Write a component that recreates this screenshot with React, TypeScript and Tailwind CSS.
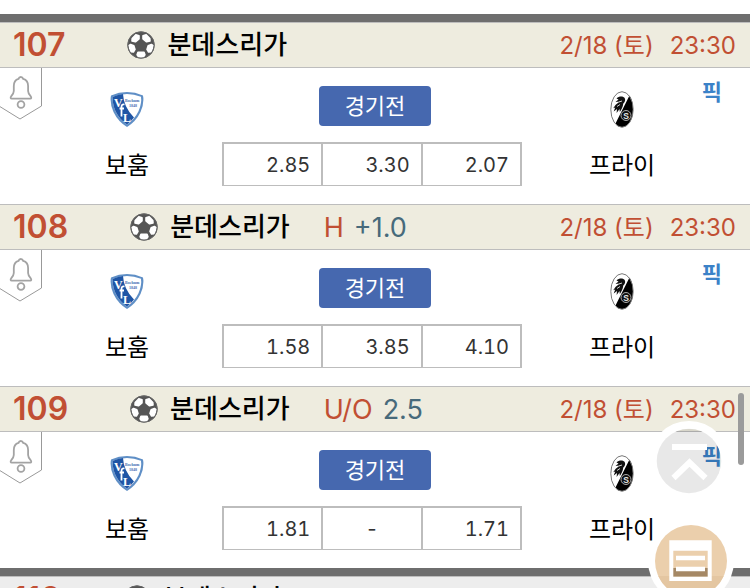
import React from 'react';

type Match = {
  no: string;
  league: string;
  kind?: string;
  line?: string;
  date: string;
  time: string;
  home: string;
  away: string;
  odds: string[];
};

const matches: Match[] = [
  {
    no: '107',
    league: '분데스리가',
    date: '2/18 (토)',
    time: '23:30',
    home: '보훔',
    away: '프라이',
    odds: ['2.85', '3.30', '2.07'],
  },
  {
    no: '108',
    league: '분데스리가',
    kind: 'H',
    line: '+1.0',
    date: '2/18 (토)',
    time: '23:30',
    home: '보훔',
    away: '프라이',
    odds: ['1.58', '3.85', '4.10'],
  },
  {
    no: '109',
    league: '분데스리가',
    kind: 'U/O',
    line: '2.5',
    date: '2/18 (토)',
    time: '23:30',
    home: '보훔',
    away: '프라이',
    odds: ['1.81', '-', '1.71'],
  },
];

const SoccerBall = () => (
  <svg viewBox="0 0 28 28" className="size-7 shrink-0" aria-hidden="true">
    <circle cx="14" cy="14" r="13.6" fill="#555" />
    <g fill="#fff" stroke="#fff" strokeWidth="1.600" strokeLinejoin="round">
      <path d="M5.200 7.500 8.800 3.800l3.200 1v3L8.400 10.800 5 10Z" />
      <path d="M22.800 7.500 19.200 3.800l-3.200 1v3l3.600 3 3.400-.8Z" />
      <path d="M1.800 14.600 3.600 13.500l3.200 1.300 1.200 3.600-1.600 2.600-2.600-.4Z" />
      <path d="M26.200 14.600 24.400 13.500l-3.200 1.300-1.200 3.600 1.600 2.600 2.600-.4Z" />
      <path d="M11 21.200h6l.9 2.600-1.600 2.200h-4.600l-1.600-2.200Z" />
    </g>
    <circle cx="14" cy="14" r="13.2" fill="none" stroke="#666" />
  </svg>
);

// Bochum shield
const HomeCrest = () => (
  <svg viewBox="0 0 34 37" className="h-[37px] w-[34px]" aria-hidden="true">
    <path d="M1 4.400Q17-2.200 33 4.400 34.500 12 30.500 21 26 30.500 17 36 8 30.500 3.500 21-.5 12 1 4.400Z" fill="#5f8fc6" />
    <path d="M3 5.800Q17 .4 31 5.800 32 12 28.600 20 24.500 28.500 17 33.500 9.500 28.500 5.400 20 2 12 3 5.800Z" fill="#fff" />
    <path d="M3 5.800Q8 3.400 13 3 13.500 16 24 26.500 21 30.500 17 33.500 9.500 28.500 5.400 20 2 12 3 5.800Z" fill="#1f55a5" />
    <g fill="#fff" fontFamily="Liberation Serif, serif" fontWeight="700">
      <text x="4" y="15.500" fontSize="12">V</text>
      <text x="13" y="30.500" fontSize="12">L</text>
    </g>
    <path d="M14.500 13.500c-2.200-.6-3 .8-3 2.600v9.500M9.500 17.500h4.500" fill="none" stroke="#fff" strokeWidth="1.800" />
    <g fill="#3f6fb2" fontFamily="Liberation Serif, serif" fontWeight="700">
      <text x="15" y="10.500" fontSize="4">Bochum</text>
      <text x="19" y="16" fontSize="4">1848</text>
    </g>
  </svg>
);

// Freiburg oval
const AwayCrest = () => (
  <svg viewBox="0 0 24 37" className="h-[37px] w-6" aria-hidden="true">
    <ellipse cx="12" cy="18.500" rx="11" ry="17.600" fill="#fff" />
    <path d="M19.500 4.500C22 8.500 23 13 23 18.500 23 28 18.500 36 12 36c-3 0-5-1-6.500-3.500Z" fill="#000" />
    <path
      d="M6.500 7.500c2.500-2.500 6-2.600 8-.7 1.300 1.700.6 4.300-1.200 5.600-.5 3.600-1.600 5.600-3.500 8.600l-.3-3-2.900 4 .4-3.900-3.300 2.400 1.500-4-2 .7 2.500-3.500 4.200-3.300-4.400.6 3-2.500Z"
      fill="#111"
    />
    <path d="m9 11 3-1M7 15.500l3-2" stroke="#fff" strokeWidth=".8" />
    <ellipse cx="12" cy="18.500" rx="11.200" ry="17.800" fill="none" stroke="#777" strokeWidth="1" />
    <circle cx="16" cy="24.500" r="5" fill="#111" stroke="#aaa" strokeWidth="1" />
    <text
      x="16"
      y="27.500"
      fontSize="8.500"
      fontWeight="700"
      fill="#e5e5e5"
      textAnchor="middle"
      fontFamily="Liberation Sans, sans-serif"
    >
      S
    </text>
  </svg>
);

const AlarmTag = () => (
  <svg viewBox="0 0 42 52" className="h-[52px] w-[42px]" fill="none" aria-hidden="true">
    <path d="M41.500 0v38L20 51-1 38" stroke="#999" />
    <path
      d="M20.800 9c-1.500 0-2 1-2.300 1.900-3.300 1-4.700 3.500-4.700 7.100v5c0 2.500-1 3.600-2.700 5.500-.8 1-.5 2.200.6 2.200h18.600c1 0 1.300-1.200.5-2.200-1.700-1.900-2.700-3-2.700-5.500v-5c0-3.600-1.500-6.100-4.900-7.100-.3-.9-.9-1.900-2.400-1.900Z"
      stroke="#a3a3a3"
      strokeWidth="1.800"
    />
    <circle cx="21" cy="36.500" r="3.400" stroke="#a3a3a3" strokeWidth="1.800" />
  </svg>
);

const MatchHeader = ({ match, muted = false }: { match: Match; muted?: boolean }) => (
  <header
    className={`flex h-[46px] items-center justify-between border-y border-[#bdbdbd] pl-[13px] pr-[14px] ${
      muted ? 'bg-[#ededed]' : 'bg-[#eeecdf]'
    }`}
  >
    <div className="flex items-center">
      <span className="text-[32px] font-semibold text-[#c14f33]">{match.no}</span>
      <span className="ml-[62px] flex items-center gap-3">
        <SoccerBall />
        <h2 className="text-[26px] font-medium text-black">{match.league}</h2>
      </span>
      {match.kind && (
        <span className="ml-[34px] flex gap-[10px] pt-[2px] text-[27px]">
          <span className="text-[#c14f33]">{match.kind}</span>
          <span className="text-[#476a7b]">{match.line}</span>
        </span>
      )}
    </div>
    <div className="flex gap-4 pt-[2px] text-2xl text-[#c14f33]">
      <span>{match.date}</span>
      <time>{match.time}</time>
    </div>
  </header>
);

const MatchCard = ({ match }: { match: Match }) => (
  <article>
    <MatchHeader match={match} />
    <div className="relative grid h-[136px] grid-cols-[1fr_306px_1fr] pt-[18px]">
      <button type="button" aria-label="알림" className="absolute left-0 top-0">
        <AlarmTag />
      </button>
      <div className="flex flex-col items-center gap-[22px] pl-8 pt-[5px]">
        <HomeCrest />
        <span className="text-2xl text-black">{match.home}</span>
      </div>
      <div className="flex flex-col gap-4">
        <button
          type="button"
          className="h-10 w-28 self-center rounded bg-[#4668af] text-[22px] leading-10 text-white"
        >
          경기전
        </button>
        <table className="w-[300px] table-fixed border-collapse">
          <tbody>
            <tr>
              {match.odds.map((odd, i) => (
                <td
                  key={i}
                  className={`h-[42px] border-2 border-b border-[#bdbdbd] p-0 pt-[2px] text-xl tabular-nums text-[#333] ${
                    odd === '-' ? 'text-center' : 'pr-[11px] text-right'
                  }`}
                >
                  {odd}
                </td>
              ))}
            </tr>
          </tbody>
        </table>
      </div>
      <div className="flex flex-col items-center gap-[22px] pr-[34px] pt-[5px]">
        <AwayCrest />
        <span className="text-2xl text-black">{match.away}</span>
      </div>
      <a href="#pick" className="absolute right-7 top-2 text-[22px] font-bold text-[#3b82c8]">
        픽
      </a>
    </div>
  </article>
);

export default function App() {
  return (
    <div className="relative h-screen overflow-hidden bg-white pt-[14px] font-[Inter,'Noto_Sans_CJK_KR',sans-serif] leading-8">
      <main>
        <section className="border-t-8 border-[#6e6e6e]">
          {matches.map((match) => (
            <MatchCard key={match.no} match={match} />
          ))}
        </section>
        <section className="border-t-8 border-[#6e6e6e]">
          <MatchHeader match={{ ...matches[0], no: '110' }} muted />
        </section>
      </main>

      {/* Floating buttons */}
      <button
        type="button"
        aria-label="맨 위로"
        className="absolute bottom-[87px] right-[21px] z-10 size-20 rounded-full"
      >
        <svg viewBox="0 0 80 80" className="size-20" fill="none" aria-hidden="true">
          <circle cx="40" cy="40" r="36" stroke="#fff" strokeWidth="8" />
          <circle cx="40" cy="40" r="32.300" fill="#000" fillOpacity=".09" />
          <path d="M23 26h35" stroke="#fff" strokeWidth="6" />
          <path d="M24.500 57 40.500 41.500 56.500 57" stroke="#fff" strokeWidth="6" />
        </svg>
      </button>
      <button
        type="button"
        aria-label="메뉴"
        className="absolute -bottom-4 right-4 z-10 size-[86px] rounded-full"
      >
        <svg viewBox="0 0 86 86" className="size-[86px]" fill="none" aria-hidden="true">
          <circle cx="43" cy="43" r="43" fill="#fff" />
          <circle cx="43" cy="43" r="36" fill="#ebcfac" />
          <path d="M10.200 58h65.600A36 36 0 0 1 10.200 58Z" fill="#e4c6a1" />
          <path d="M25 50h36v8.700H25Z" fill="#a58865" />
          <path
            d="M21.300 22.300h42.400V63H21.300ZM25.300 32.700v26h34.400v-26Z"
            fill="#fff"
            fillRule="evenodd"
          />
          <path d="M28 40h29M28 51h29" stroke="#fff" strokeWidth="4.300" />
        </svg>
      </button>
      <div className="absolute right-[6px] top-[393px] z-30 h-[72px] w-[6px] rounded-full bg-[#9b9b9b]" />
    </div>
  );
}
